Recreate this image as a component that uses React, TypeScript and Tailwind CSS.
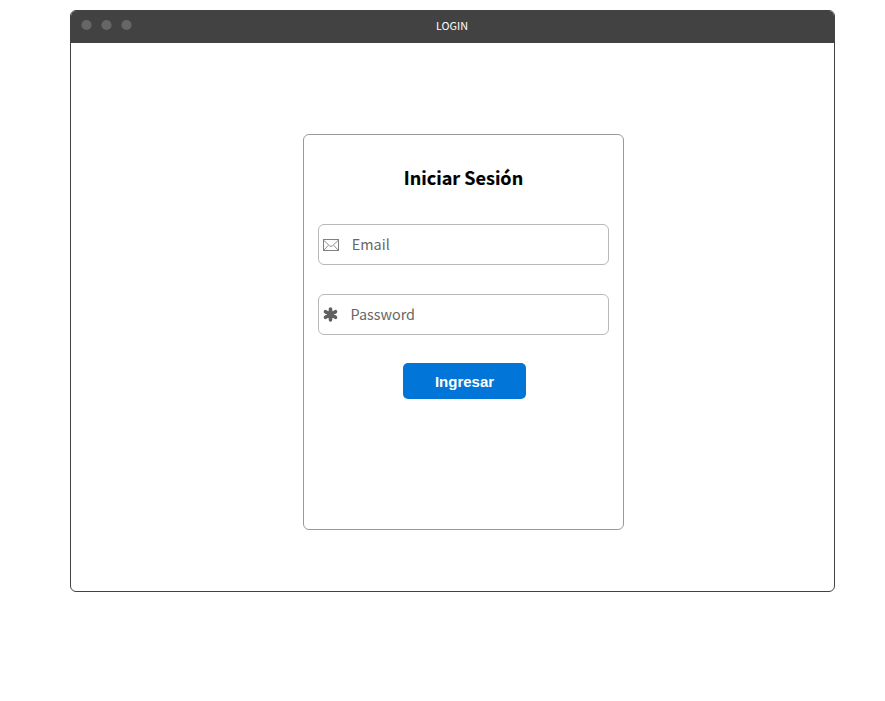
import type { ReactNode } from "react";

function WindowDots() {
  return (
    <svg width="52" height="12" viewBox="0 0 52 12" fill="#666">
      <circle cx="5.5" cy="6" r="5.1" />
      <circle cx="25.5" cy="6" r="5.1" />
      <circle cx="45.5" cy="6" r="5.1" />
    </svg>
  );
}

function MailIcon() {
  return (
    <svg width="16" height="12" viewBox="0 0 16 12" fill="none" stroke="#808080" strokeWidth="1">
      <rect x="0.5" y="0.5" width="15" height="11" />
      <path d="M1 1.5 L6.5 6.8 Q8 8 9.5 6.8 L15 1.5 M1 11 L5.2 6.4 M15 11 L10.8 6.4" strokeWidth="0.9" />
    </svg>
  );
}

function AsteriskIcon() {
  return (
    <svg width="15" height="15" viewBox="0 0 15 15" fill="none" stroke="#606060">
      <path d="M7.5 2V13M2.5 4.7L12.5 10.3M12.5 4.7L2.5 10.3" strokeWidth="3" />
      <path d="M7.5 2V13M2.5 4.7L12.5 10.3M12.5 4.7L2.5 10.3" strokeWidth="3.6" strokeLinecap="round" />
    </svg>
  );
}

function Field({ icon, children }: { icon: ReactNode; children: ReactNode }) {
  return (
    <div className="flex h-[41px] items-center rounded-[6px] border border-[#b8b8b8] pl-1 text-[14.4px] leading-[22px] text-[#666]">
      {icon}
      {children}
    </div>
  );
}

export default function App() {
  return (
    <div className="h-[701px] w-[885px] bg-white pl-[70px] pt-[10px] font-['Noto_Sans_CJK_JP','Noto_Sans',sans-serif]">
      <div className="h-[582px] w-[765px] overflow-hidden rounded-[6px] border border-[#424242]">
        <header className="grid h-8 grid-cols-[1fr_auto_1fr] bg-[#424242]">
          <div className="pl-[10px] pt-2">
            <WindowDots />
          </div>
          <h1 className="pr-px pt-[6px] text-[10.8px] leading-4 text-white">LOGIN</h1>
        </header>
        <main className="pl-[232px] pt-[91px]">
          <section className="flex h-[396px] w-[321px] flex-col rounded-[6px] border border-[#999] px-[14px]">
            <h2 className="mt-[27px] text-center text-[18px] font-bold leading-[30px] text-black [-webkit-text-stroke:0.2px_black]">
              Iniciar Sesión
            </h2>
            <div className="mt-[32px] flex flex-col gap-[29px]">
              <Field icon={<MailIcon />}>
                <span className="ml-[12.8px] pb-px">Email</span>
              </Field>
              <Field icon={<AsteriskIcon />}>
                <span className="ml-[12.5px] pb-px">Password</span>
              </Field>
            </div>
            <button className="ml-[85px] mt-7 h-9 w-[123px] rounded-[5px] bg-[#0275d8] pt-[2px] font-['Liberation_Sans',sans-serif] text-[15px] font-bold text-white">
              Ingresar
            </button>
          </section>
        </main>
      </div>
    </div>
  );
}
